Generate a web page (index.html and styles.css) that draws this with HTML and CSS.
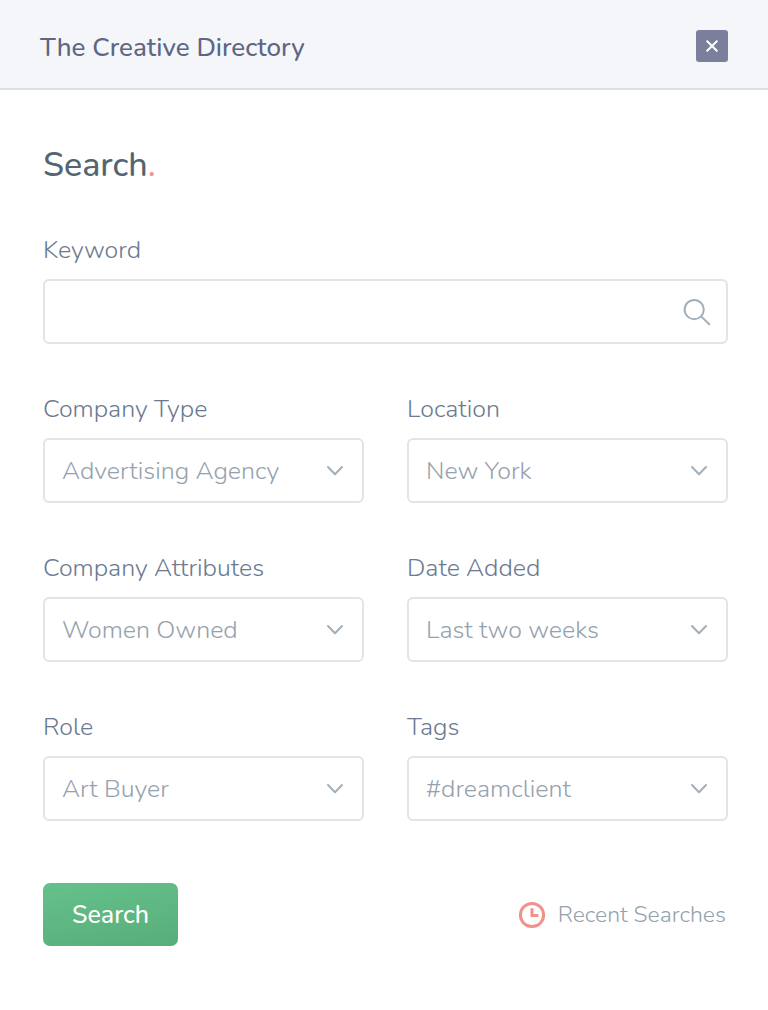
FILE: index.html
```html
<!DOCTYPE html>
<html lang="en">
<head>
<meta charset="utf-8">
<meta name="viewport" content="width=device-width, initial-scale=1">
<title>The Creative Directory</title>
<link rel="stylesheet" href="styles.css">
</head>
<body>
<header class="topbar">
  <span class="brand">The Creative Directory</span>
  <button class="close" type="button" aria-label="Close">
    <svg width="12" height="12" viewBox="0 0 12 12" aria-hidden="true"><path d="M1.2 1.2 10.8 10.8M10.8 1.2 1.2 10.8"/></svg>
  </button>
</header>
<main class="content">
  <h1 class="title">Search<span class="dot">.</span></h1>
  <form class="form">
    <div class="field field-wide">
      <label class="label" for="keyword">Keyword</label>
      <div class="control">
        <input class="box" id="keyword" type="text">
        <svg class="icon icon-search" width="28" height="28" viewBox="0 0 28 28" aria-hidden="true"><circle cx="11.2" cy="11.6" r="9.6"/><path d="M18.2 18.4 26.2 26.2"/></svg>
      </div>
    </div>
    <div class="field">
      <label class="label" for="type">Company Type</label>
      <div class="control">
        <select class="box" id="type"><option>Advertising Agency</option></select>
        <svg class="icon icon-chevron" width="18" height="12" viewBox="0 0 18 12" aria-hidden="true"><path d="M2 2 9 9.2 16 2"/></svg>
      </div>
    </div>
    <div class="field">
      <label class="label" for="location">Location</label>
      <div class="control">
        <select class="box" id="location"><option>New York</option></select>
        <svg class="icon icon-chevron" width="18" height="12" viewBox="0 0 18 12" aria-hidden="true"><path d="M2 2 9 9.2 16 2"/></svg>
      </div>
    </div>
    <div class="field">
      <label class="label" for="attributes">Company Attributes</label>
      <div class="control">
        <select class="box" id="attributes"><option>Women Owned</option></select>
        <svg class="icon icon-chevron" width="18" height="12" viewBox="0 0 18 12" aria-hidden="true"><path d="M2 2 9 9.2 16 2"/></svg>
      </div>
    </div>
    <div class="field">
      <label class="label" for="added">Date Added</label>
      <div class="control">
        <select class="box" id="added"><option>Last two weeks</option></select>
        <svg class="icon icon-chevron" width="18" height="12" viewBox="0 0 18 12" aria-hidden="true"><path d="M2 2 9 9.2 16 2"/></svg>
      </div>
    </div>
    <div class="field">
      <label class="label" for="role">Role</label>
      <div class="control">
        <select class="box" id="role"><option>Art Buyer</option></select>
        <svg class="icon icon-chevron" width="18" height="12" viewBox="0 0 18 12" aria-hidden="true"><path d="M2 2 9 9.2 16 2"/></svg>
      </div>
    </div>
    <div class="field">
      <label class="label" for="tags">Tags</label>
      <div class="control">
        <select class="box" id="tags"><option>#dreamclient</option></select>
        <svg class="icon icon-chevron" width="18" height="12" viewBox="0 0 18 12" aria-hidden="true"><path d="M2 2 9 9.2 16 2"/></svg>
      </div>
    </div>
    <div class="actions">
      <button class="submit" type="submit">Search</button>
      <a class="recent" href="#recent">
        <svg width="28" height="28" viewBox="0 0 28 28" aria-hidden="true"><circle cx="14" cy="14" r="11.6"/><path d="M14 7.3V14.6H20.4"/></svg>
        Recent Searches
      </a>
    </div>
  </form>
</main>
</body>
</html>
```
FILE: styles.css
```css
* {
  box-sizing: border-box;
}

body {
  margin: 0;
  background: #fff;
  color: #6b7a8f;
  font-family: Nunito, "Open Sans", sans-serif;
  font-size: 25px;
  font-weight: 350;
  line-height: 32px;
}

button,
input,
select {
  font: inherit;
}

.topbar {
  display: flex;
  align-items: center;
  justify-content: space-between;
  height: 90px;
  padding: 4px 40px 0;
  background: #f5f6fa;
  border-bottom: 2px solid #dddfe8;
}

.brand {
  padding-top: 3px;
  color: #5d6684;
  font-size: 26px;
  font-weight: 500;
}

.close {
  display: grid;
  place-items: center;
  width: 32px;
  height: 32px;
  padding: 0;
  border: 0;
  border-radius: 3px;
  background: #7c7f9b;
}

.close path {
  fill: none;
  stroke: #fff;
  stroke-width: 2;
  stroke-linecap: round;
}

.content {
  padding: 55px 40px 64px 43px;
}

.title {
  margin: 0 0 48px;
  color: #546472;
  font-size: 34px;
  font-weight: 550;
  line-height: 40px;
}

.dot {
  color: #f2938c;
}

.form {
  display: grid;
  grid-template-columns: 1fr 1fr;
  gap: 48px 43px;
}

.field {
  display: grid;
  gap: 12px;
  min-width: 0;
}

.label {
  line-height: 34px;
}

.field-wide,
.actions {
  grid-column: 1 / -1;
}

.control {
  display: grid;
  align-items: center;
}

.control > * {
  grid-area: 1 / 1;
}

.box {
  appearance: none;
  width: 100%;
  height: 65px;
  padding: 0 48px 0 17px;
  border: 2px solid #dfe5e8;
  border-radius: 6px;
  background: #fff;
  color: #95a2ad;
}

.icon {
  justify-self: end;
  margin-right: 20px;
  pointer-events: none;
  fill: none;
  stroke: #a3afb9;
  stroke-width: 2;
  stroke-linecap: round;
  stroke-linejoin: round;
}

.icon-search {
  margin-right: 17px;
}

.actions {
  display: flex;
  align-items: center;
  justify-content: space-between;
  padding-top: 14px;
}

.submit {
  height: 63px;
  padding: 0 29px;
  border: 0;
  border-radius: 7px;
  background: linear-gradient(170deg, #65c18b, #58ad79);
  color: #fff;
  font-weight: 500;
}

.recent {
  display: flex;
  align-items: center;
  gap: 12px;
  padding-right: 2px;
  color: #95a2ad;
  font-size: 23px;
  text-decoration: none;
}

.recent svg {
  fill: none;
  stroke: #f0918a;
  stroke-width: 3;
}
```
